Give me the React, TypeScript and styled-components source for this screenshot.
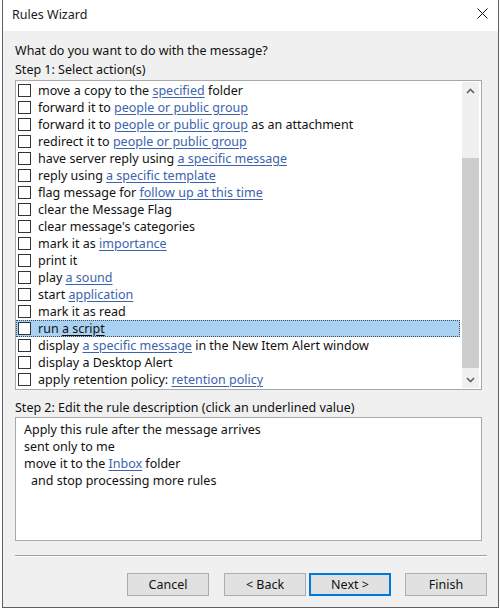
import React from 'react';
import styled, { createGlobalStyle } from 'styled-components';

const GlobalStyle = createGlobalStyle`
  html, body {
    margin: 0;
    padding: 0;
    background: #ffffff;
  }
  body {
    font-family: 'Noto Sans', 'Segoe UI', sans-serif;
    font-size: 12.5px;
    color: #000;
  }
`;

// [brackets] mark the underlined values
const actions = [
  'move a copy to the [specified] folder',
  'forward it to [people or public group]',
  'forward it to [people or public group] as an attachment',
  'redirect it to [people or public group]',
  'have server reply using [a specific message]',
  'reply using [a specific template]',
  'flag message for [follow up at this time]',
  'clear the Message Flag',
  "clear message's categories",
  'mark it as [importance]',
  'print it',
  'play [a sound]',
  'start [application]',
  'mark it as read',
  'run [a script]',
  'display [a specific message] in the New Item Alert window',
  'display a Desktop Alert',
  'apply retention policy: [retention policy]',
];

const SELECTED = 14;

const renderParts = (text: string, selected: boolean) =>
  text.split(/(\[[^\]]+\])/).filter(Boolean).map((part, i) =>
    part.startsWith('[') ? (
      <Link key={i} $plain={selected}>{part.slice(1, -1)}</Link>
    ) : (
      <span key={i}>{part}</span>
    )
  );

const Chevron = ({ down }: { down?: boolean }) => (
  <svg width="9" height="6" viewBox="0 0 9 6">
    <path
      d={down ? 'M1 1 L4.5 4.5 L8 1' : 'M1 5 L4.5 1.5 L8 5'}
      fill="none"
      stroke="#606060"
      strokeWidth="1.6"
    />
  </svg>
);

export default function App() {
  return (
    <>
      <GlobalStyle />
      <Dialog>
        <TitleBar>
          <Title>Rules Wizard</Title>
          <CloseButton aria-label="Close">
            <svg width="11" height="11" viewBox="0 0 11 11">
              <path d="M0.5 0.5 L10.5 10.5 M10.5 0.5 L0.5 10.5" stroke="#111" strokeWidth="1" />
            </svg>
          </CloseButton>
        </TitleBar>

        <Body>
          <Label>What do you want to do with the message?</Label>
          <Label>Step 1: Select action(s)</Label>

          <ListBox>
            <Rows>
              {actions.map((a, i) => (
                <Row key={a} $selected={i === SELECTED}>
                  <Checkbox />
                  <RowText>{renderParts(a, i === SELECTED)}</RowText>
                </Row>
              ))}
            </Rows>
            <ScrollBar>
              <ArrowButton><Chevron /></ArrowButton>
              <Track>
                <Thumb />
              </Track>
              <ArrowButton><Chevron down /></ArrowButton>
            </ScrollBar>
          </ListBox>

          <Label $top={8}>Step 2: Edit the rule description (click an underlined value)</Label>

          <DescriptionBox>
            <DescLine>Apply this rule after the message arrives</DescLine>
            <DescLine>sent only to me</DescLine>
            <DescLine>move it to the <Link>Inbox</Link> folder</DescLine>
            <DescLine $indent>and stop processing more rules</DescLine>
          </DescriptionBox>

          <Separator />

          <ButtonRow>
            <Button>Cancel</Button>
            <Button $gap={15}>&lt; Back</Button>
            <Button $gap={3} $default>Next &gt;</Button>
            <Button $gap={14}>Finish</Button>
          </ButtonRow>
        </Body>
      </Dialog>
    </>
  );
}

const Dialog = styled.div`
  box-sizing: border-box;
  width: 497px;
  height: 608px;
  margin-left: 2px;
  border: 1px solid #5f5f5f;
  border-top: none;
  display: flex;
  flex-direction: column;
  background: #f0f0f0;
`;

const TitleBar = styled.div`
  height: 31px;
  flex: none;
  background: #ffffff;
  display: flex;
  align-items: center;
  justify-content: space-between;
  padding: 0 8px 0 9px;
`;

const Title = styled.div`
  font-size: 12.5px;
  color: #1a1a1a;
  margin-top: -3px;
`;

const CloseButton = styled.div`
  width: 16px;
  height: 16px;
  display: flex;
  align-items: center;
  justify-content: center;
  margin-top: -5px;
`;

const Body = styled.div`
  flex: 1;
  display: flex;
  flex-direction: column;
  padding: 10px 12px 0 12px;
`;

const Label = styled.div<{ $top?: number }>`
  line-height: 19px;
  margin-top: ${p => p.$top || 0}px;
  color: #111;
`;

const ListBox = styled.div`
  box-sizing: border-box;
  width: 467px;
  height: 310px;
  margin-top: 1px;
  border: 1px solid #a9a9a9;
  background: #ffffff;
  padding: 1px 2px 1px 0;
  display: flex;
`;

const Rows = styled.div`
  flex: 1;
  display: flex;
  flex-direction: column;
`;

const Row = styled.div<{ $selected?: boolean }>`
  box-sizing: border-box;
  height: 17px;
  display: flex;
  align-items: center;
  padding-left: 2px;
  margin-right: 2px;
  background: ${p => (p.$selected ? '#a9d1f2' : 'transparent')};
  outline: ${p => (p.$selected ? '1px dotted #3a4a5a' : 'none')};
  outline-offset: -1px;
`;

const Checkbox = styled.span`
  box-sizing: border-box;
  width: 13px;
  height: 13px;
  flex: none;
  border: 1px solid #333333;
  background: #ffffff;
`;

const RowText = styled.span`
  margin-left: 7px;
  white-space: nowrap;
  color: #111;
`;

const Link = styled.span<{ $plain?: boolean }>`
  color: ${p => (p.$plain ? '#111' : '#3c63ad')};
  text-decoration: underline;
  text-underline-offset: 2px;
`;

const ScrollBar = styled.div`
  width: 17px;
  flex: none;
  display: flex;
  flex-direction: column;
  background: #f0f0f0;
`;

const ArrowButton = styled.div`
  height: 17px;
  flex: none;
  display: flex;
  align-items: center;
  justify-content: center;
`;

const Track = styled.div`
  flex: 1;
  padding-top: 59px;
`;

const Thumb = styled.div`
  height: 210px;
  background: #cdcdcd;
`;

const DescriptionBox = styled.div`
  box-sizing: border-box;
  width: 467px;
  height: 124px;
  border: 1px solid #a9a9a9;
  background: #ffffff;
  padding: 3px 8px;
`;

const DescLine = styled.div<{ $indent?: boolean }>`
  line-height: 17px;
  padding-left: ${p => (p.$indent ? 7 : 0)}px;
  color: #111;
`;

const Separator = styled.div`
  width: 472px;
  height: 1px;
  margin-top: 14px;
  background: #a0a0a0;
  border-bottom: 1px solid #ffffff;
`;

const ButtonRow = styled.div`
  display: flex;
  justify-content: flex-end;
  margin-right: -1px;
  margin-top: 16px;
`;

const Button = styled.div<{ $gap?: number; $default?: boolean }>`
  box-sizing: border-box;
  width: 82px;
  height: 23px;
  margin-left: ${p => p.$gap || 0}px;
  display: flex;
  align-items: center;
  justify-content: center;
  background: #e1e1e1;
  border: ${p => (p.$default ? '2px solid #0078d7' : '1px solid #adadad')};
  color: #111;
`;
